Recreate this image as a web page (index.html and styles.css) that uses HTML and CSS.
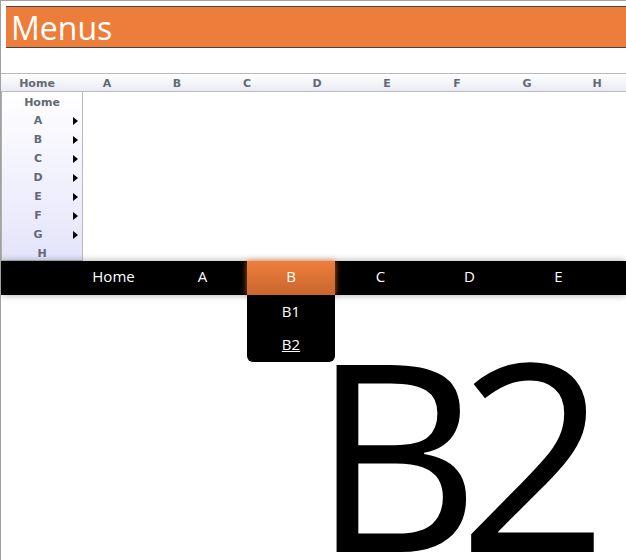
FILE: index.html
```html
<!DOCTYPE html>
<html lang="en">
<head>
    <meta charset="UTF-8">
    <meta name="viewport" content="width=device-width, initial-scale=1.0">
    <title>Menus</title>
    <link rel="stylesheet" href="styles.css">
</head>
<body>
    <div class="frame">
        <h1 class="title">Menus</h1>

        <ul class="hmenu">
            <li>Home</li>
            <li>A</li>
            <li>B</li>
            <li>C</li>
            <li>D</li>
            <li>E</li>
            <li>F</li>
            <li>G</li>
            <li>H</li>
        </ul>

        <ul class="vmenu">
            <li class="home">Home</li>
            <li class="sub">A</li>
            <li class="sub">B</li>
            <li class="sub">C</li>
            <li class="sub">D</li>
            <li class="sub">E</li>
            <li class="sub">F</li>
            <li class="sub">G</li>
            <li>H</li>
        </ul>

        <nav class="bar">
            <ul class="bar-items">
                <li>Home</li>
                <li>A</li>
                <li class="active"><span>B</span>
                    <ul class="drop">
                        <li>B1</li>
                        <li><a href="#">B2</a></li>
                    </ul>
                </li>
                <li>C</li>
                <li>D</li>
                <li>E</li>
            </ul>
        </nav>

        <div class="big">B2</div>
    </div>
</body>
</html>
```

FILE: styles.css
```css
body {
    margin: 0;
    overflow: hidden;
    background: #fff;
}
ul {
    list-style: none;
    margin: 0;
    padding: 0;
}
.frame {
    height: 100vh;
    overflow: hidden;
    border-top: 1px solid #a0a0a0;
    border-left: 1px solid #a0a0a0;
}
.title {
    margin: 5px 0 25px 5px;
    padding: 2px 0 0 5px;
    height: 38px;
    line-height: 38px;
    background: #ed7d3b;
    border-top: 1px solid #444;
    border-bottom: 1px solid #444;
    color: #fff;
    font-family: "Open Sans", sans-serif;
    font-size: 32px;
    font-weight: normal;
}
.hmenu {
    display: flex;
    overflow: hidden;
    padding-left: 1px;
    height: 17px;
    border-top: 1px solid #b9b9b9;
    border-bottom: 1px solid #b9b9b9;
    background: linear-gradient(#fff, #e8ebf2);
}
.hmenu li, .vmenu li {
    font-family: "DejaVu Sans", Verdana, sans-serif;
    font-size: 11px;
    font-weight: bold;
    color: #646978;
    text-align: center;
}
.hmenu li {
    flex: 0 0 70px;
    padding-top: 1px;
    line-height: 18px;
}
.vmenu {
    width: 80px;
    height: 168px;
    overflow: hidden;
    border-left: 1px solid #b0b0b0;
    border-right: 1px solid #b9b9b9;
    border-bottom: 1px solid #b9b9b9;
    background: linear-gradient(#fff, #e4e4fb);
}
.vmenu li {
    position: relative;
    padding-top: 1px;
    line-height: 18px;
}
.vmenu .home {
    padding-top: 2px;
    line-height: 17px;
}
.vmenu .sub {
    padding-right: 8px;
}
.vmenu .sub::after {
    content: "";
    position: absolute;
    right: 4px;
    top: 6px;
    border-left: 5px solid #000;
    border-top: 4px solid transparent;
    border-bottom: 4px solid transparent;
}
.bar {
    background: #000;
    box-shadow: 0 0 7px rgba(0, 0, 0, 0.35);
}
.bar-items {
    display: flex;
    padding-left: 68px;
}
.bar-items > li {
    position: relative;
    flex: 0 0 89px;
    height: 34px;
    line-height: 30px;
    font-family: "Open Sans", sans-serif;
    font-size: 15px;
    color: #fff;
    text-align: center;
}
.bar-items > li.active {
    flex-basis: 88px;
    margin-right: 1px;
    background: linear-gradient(#ee7e3c, #c9662f);
    box-shadow: 0 0 6px rgba(232, 120, 50, 0.8);
}
.drop {
    position: absolute;
    top: 100%;
    left: 0;
    width: 88px;
    padding-bottom: 1px;
    background: #000;
    border-radius: 0 0 6px 6px;
    z-index: 2;
}
.drop li {
    height: 33px;
    line-height: 33px;
    font-family: "Open Sans", sans-serif;
    font-size: 15px;
    color: #fff;
    text-align: center;
}
.drop a {
    color: #fff;
}
.big {
    margin-top: 25px;
    padding-left: 310px;
    font-family: "Open Sans", sans-serif;
    font-size: 262px;
    line-height: 1;
    letter-spacing: -22px;
    white-space: nowrap;
    color: #000;
}
```
